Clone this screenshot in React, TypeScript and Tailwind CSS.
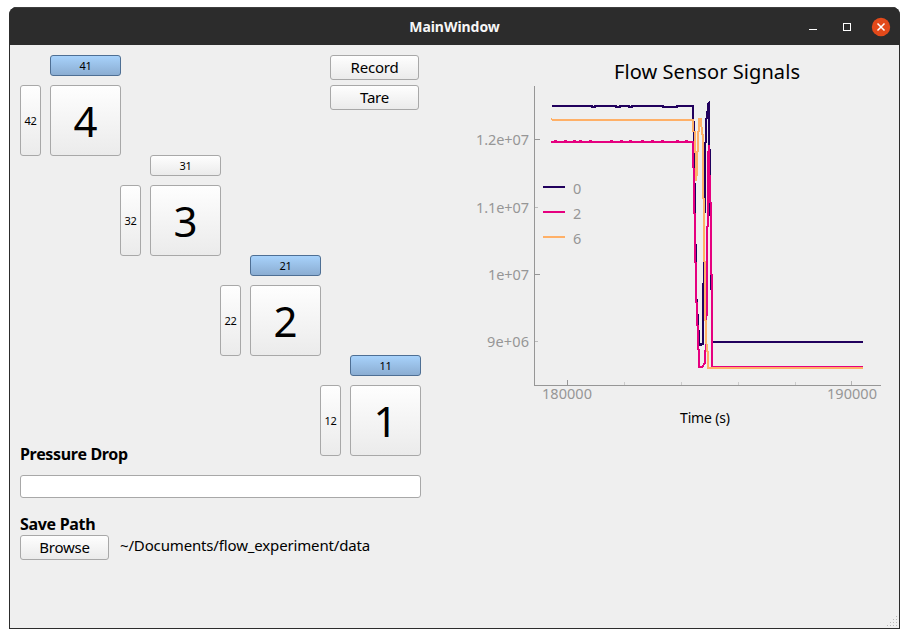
import type { ReactNode } from "react";

const FONT = "font-['Noto_Sans','Open_Sans',sans-serif]";
const GREY_FACE = "border-[#a8a8a8] bg-linear-to-b from-[#fefefe] to-[#ebebeb]";
const BLUE_FACE = "border-[#4e6f94] bg-linear-to-b from-[#a7d2fb] to-[#8badd2]";

function Button({ className, active = false, children }: { className: string; active?: boolean; children: ReactNode }) {
  return (
    <button
      type="button"
      className={`flex shrink-0 items-center justify-center rounded-[3px] border whitespace-nowrap text-black ${active ? BLUE_FACE : GREY_FACE} ${className}`}
    >
      {children}
    </button>
  );
}

// One valve station: a wide toggle on top, a narrow one on the left, and the main key.
function Station({ id, active, place }: { id: number; active: boolean; place: string }) {
  return (
    <div className={`grid h-[101px] w-[101px] grid-cols-[21px_71px] grid-rows-[21px_71px] gap-[9px] ${place}`}>
      <Button active={active} className="col-start-2 h-[21px] w-[71px] pt-[2px] text-[11px] tracking-[-0.3px]">
        {id}1
      </Button>
      <Button className="h-[71px] w-[21px] pt-[2px] text-[11px] tracking-[-0.3px]">{id}2</Button>
      <Button className="h-[71px] w-[71px] text-[42px] leading-none">{id}</Button>
    </div>
  );
}

const NAVY =
  "551.5,106 592,106 592,107 595,107 595,106 616,106 616,107 620,107 620,106 629,106 629,107 632,107 632,106 663,106 663,107 677,107 677,106 682,106 682,105.5 685,105.5 685,106 693,106 693,120 694,123 694,183 695,184 695,244 696,245 696,299 697,300 697,314 698,315 698,330 699,331 699,342 700,345 703,344 703,284 704,283 704,213 705,212 705,143 706,142 706,119 707,118 707,112 708,111 708,104 709,103 709,144 710,153 710,202 711,229 711,275 712,305 712,342 863,342";
const MAGENTA_BUMPS = [555, 565, 574, 580, 590, 611, 621, 630, 642, 652, 662, 677, 686];
const MAGENTA =
  "551,142 " +
  MAGENTA_BUMPS.map((x) => `${x - 0.5},142 ${x - 0.5},141 ${x + 0.5},141 ${x + 0.5},142`).join(" ") +
  " 693,142 693,163 694,172 694,213 695,214 695,262 696,263 696,302 697,303 697,325 698,326 698,349 699,350 699,367 702,367 705,363 706,337 707,296 707,227 708,226 708,158 709,145 710,202 711,203 711,274 712,275 712,346 712,367 863,367";
const ORANGE =
  "551,119 553,120 693,120 693,131 695,132 695,152 696,153 696,181 697,171 697,152 698,151 698,132 699,131 699,119 701,119 702,134 703,135 703,198 704,199 704,261 705,262 705,320 706,321 706,337 707,351 708,352 708,368 863,368";

const Y_TICKS = [
  { y: 139, label: "1.2e+07", x: 476, w: 53, major: true },
  { y: 207, label: "1.1e+07", x: 476, w: 53, major: false },
  { y: 274, label: "1e+07", x: 488, w: 41, major: true },
  { y: 341, label: "9e+06", x: 487, w: 42, major: false },
];

const LEGEND = [
  { name: "0", color: "#21005d", y: 187 },
  { name: "2", color: "#e5007f", y: 212 },
  { name: "6", color: "#ffb067", y: 237 },
];

function FlowChart() {
  return (
    <svg className="ml-[39px] block h-[380px] w-[430px] shrink-0" viewBox="460 55 430 380">
      <text x="614" y="79" textLength="186" className="fill-black text-[20px]">Flow Sensor Signals</text>
      <g shapeRendering="crispEdges">
        <rect x="534" y="86" width="1" height="300" fill="#969696" />
        <rect x="534" y="385" width="347" height="1" fill="#969696" />
        {Y_TICKS.map((t) => (
          <rect key={t.y} x="535" y={t.y} width={t.major ? 5 : 3} height="1" fill={t.major ? "#969696" : "#bcbcbc"} />
        ))}
        <rect x="567" y="380" width="1" height="5" fill="#969696" />
        {[624, 681, 738, 795].map((x) => (
          <rect key={x} x={x} y="382" width="1" height="3" fill="#cccccc" />
        ))}
        <rect x="851" y="381" width="1" height="4" fill="#b4b4b4" />
        <g fill="none" strokeWidth="2">
          <polyline points={NAVY} stroke="#21005d" />
          <polyline points={MAGENTA} stroke="#e5007f" />
          <polyline points={ORANGE} stroke="#ffb067" />
        </g>
        {LEGEND.map((l) => (
          <rect key={l.name} x="543" y={l.y - 1} width="22" height="2" fill={l.color} />
        ))}
      </g>
      <g className="fill-[#969696] text-[14.5px]">
        {Y_TICKS.map((t) => (
          <text key={t.label} x={t.x} y={t.y + 6} textLength={t.w}>{t.label}</text>
        ))}
        <text x="542" y="399" textLength="50">180000</text>
        <text x="827" y="399" textLength="50">190000</text>
        {LEGEND.map((l) => (
          <text key={l.name} x="573" y={l.y + 7}>{l.name}</text>
        ))}
      </g>
      <text x="680" y="423" textLength="50" className="fill-black text-[14px]">Time (s)</text>
    </svg>
  );
}

function WindowControls() {
  return (
    <svg className="mr-[9px] block h-[20px] w-[84px] justify-self-end" viewBox="807 16 84 20">
      <rect x="809" y="28" width="8" height="1" fill="#fff" />
      <rect x="843.5" y="22.5" width="7" height="7" fill="none" stroke="#fff" />
      <circle cx="881" cy="26" r="9.2" fill="#e2491a" />
      <path d="M877.5 22.5l7 7m0-7l-7 7" stroke="#fff" strokeWidth="1.5" />
    </svg>
  );
}

// Dotted triangle in the window's lower right corner.
function SizeGrip() {
  const dots = [0, 1, 2, 3].flatMap((row) => Array.from({ length: row + 1 }, (_, i) => ({ x: 9 - i * 3, y: row * 3 })));
  return (
    <svg className="absolute right-[2px] bottom-[2px] h-[10px] w-[10px]" viewBox="0 0 10 10" shapeRendering="crispEdges">
      {dots.map((d) => (
        <rect key={`${d.x}-${d.y}`} x={d.x} y={d.y} width="1" height="1" fill="#b8b8b8" />
      ))}
    </svg>
  );
}

export default function App() {
  return (
    <div className={`h-[638px] w-[909px] overflow-hidden bg-white pt-[7px] pl-[9px] text-black ${FONT}`}>
      <div className="flex h-[622px] w-[891px] flex-col overflow-hidden rounded-t-[8px] bg-[#2c2c2c]">
        <header className="grid h-[38px] shrink-0 grid-cols-[1fr_auto_1fr] items-center border-t border-[#3e3e3e] bg-[#2c2c2c]">
          <span />
          <h1 className="text-[14px] leading-[20px] font-bold tracking-[-0.05px] text-[#f6f6f6]">MainWindow</h1>
          <WindowControls />
        </header>
        <main className="relative mx-px mb-px flex flex-1 items-start bg-[#efefef] pt-[10px] pl-[10px]">
          <section className="w-[401px] shrink-0">
            <div className="grid grid-cols-[repeat(4,100px)] grid-rows-[repeat(4,100px)]">
              <Station id={4} active place="col-start-1 row-start-1" />
              <Station id={3} active={false} place="col-start-2 row-start-2" />
              <Station id={2} active place="col-start-3 row-start-3" />
              <Station id={1} active place="col-start-4 row-start-4" />
              <div className="col-start-4 row-start-1 ml-[10px] flex flex-col gap-[5px]">
                <Button className="h-[25px] w-[89px] text-[15px] tracking-[-0.2px]">Record</Button>
                <Button className="h-[25px] w-[89px] text-[15px] tracking-[-0.2px]">Tare</Button>
              </div>
            </div>
            <h2 className="-mt-[11px] w-[200px] text-[16px] leading-[20px] font-bold tracking-[-0.32px]">Pressure Drop</h2>
            <input
              readOnly
              aria-label="Pressure Drop"
              className="mt-[11px] block h-[23px] w-[401px] rounded-[3px] border border-[#a8a8a8] bg-white outline-none"
            />
            <h2 className="mt-[16px] text-[16px] leading-[20px] font-bold tracking-[-0.32px]">Save Path</h2>
            <div className="mt-px flex items-start gap-[11px]">
              <Button className="h-[25px] w-[89px] text-[15px] tracking-[-0.2px]">Browse</Button>
              <span className="text-[15px] leading-[21px] tracking-[-0.15px] whitespace-nowrap">
                ~/Documents/flow_experiment/data
              </span>
            </div>
          </section>
          <FlowChart />
          <SizeGrip />
        </main>
      </div>
    </div>
  );
}
